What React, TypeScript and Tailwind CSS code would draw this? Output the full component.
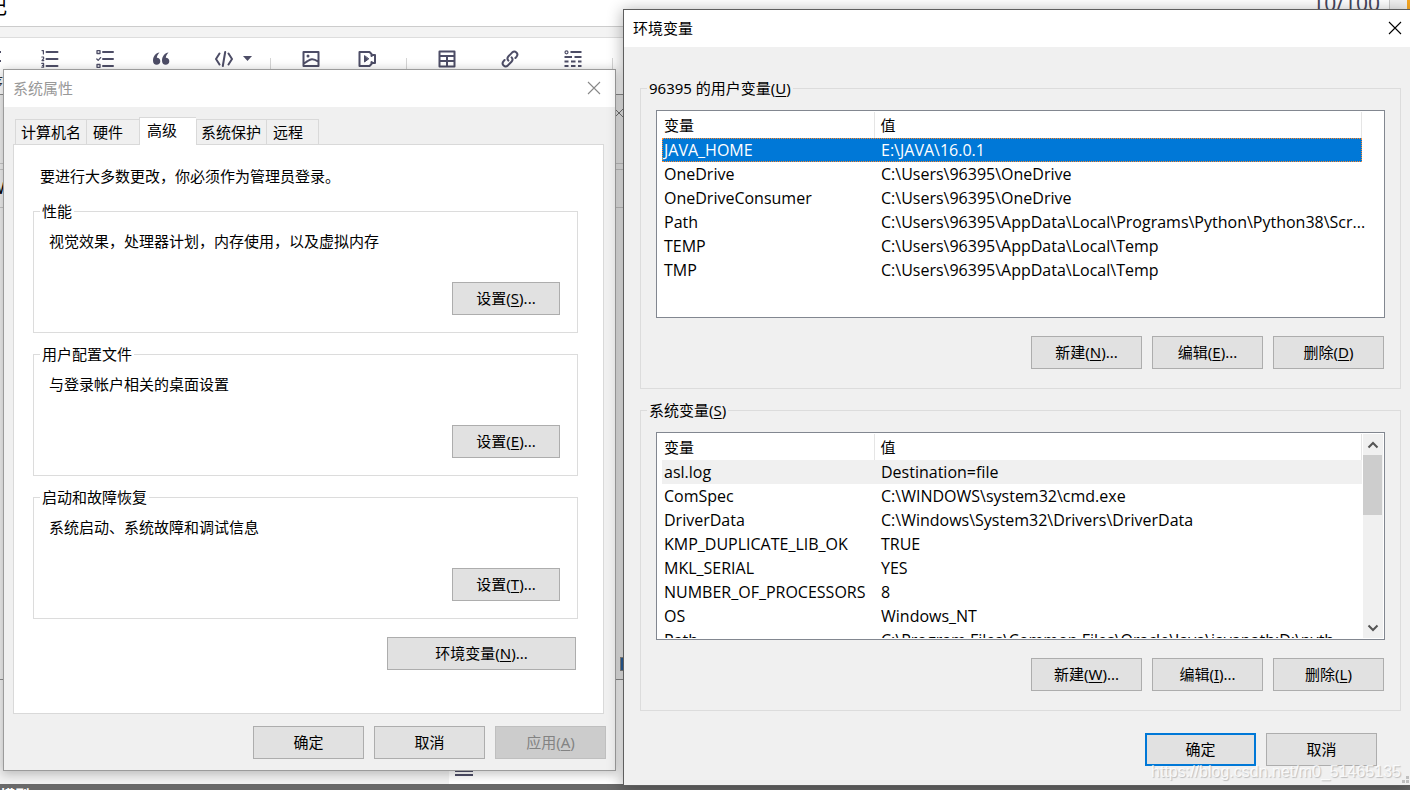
import type { ReactNode } from "react";

const toolColor = "#4d4d66";

function WindowClose({ color }: { color: string }) {
  return (
    <button type="button" aria-label="关闭" className="flex h-[35px] w-[42px] items-center justify-center">
      <svg width="14" height="14" viewBox="0 0 14 14" fill="none" stroke={color} strokeWidth="1.1">
        <path d="M1 1 L13 13 M13 1 L1 13" />
      </svg>
    </button>
  );
}

type PushButtonProps = { children: ReactNode; className?: string; primary?: boolean; disabled?: boolean };

function PushButton({ children, className = "w-[111px]", primary, disabled }: PushButtonProps) {
  const look = disabled
    ? "border border-[#bfbfbf] bg-[#cccccc] text-[#838383]"
    : primary
      ? "border-2 border-[#0078d7] bg-[#e1e1e1]"
      : "border border-[#adadad] bg-[#e1e1e1]";
  return (
    <button
      type="button"
      disabled={disabled}
      className={`flex h-[33px] shrink-0 items-center justify-center pb-[2px] whitespace-nowrap ${look} ${className}`}
    >
      <span>{children}</span>
    </button>
  );
}

function Key({ k }: { k: string }) {
  return (
    <>
      (<span className="underline underline-offset-2">{k}</span>)
    </>
  );
}

const tabs = [
  { label: "计算机名", size: "w-[71px] pl-[5px]" },
  { label: "硬件", size: "w-[53px] pl-[6px]" },
  { label: "高级", size: "w-[57px] pl-[7px]", active: true },
  { label: "系统保护", size: "w-[70px] pl-[4px]" },
  { label: "远程", size: "w-[53px] pl-[6px]" },
];

const settings = [
  { title: "性能", text: "视觉效果，处理器计划，内存使用，以及虚拟内存", k: "S" },
  { title: "用户配置文件", text: "与登录帐户相关的桌面设置", k: "E" },
  { title: "启动和故障恢复", text: "系统启动、系统故障和调试信息", k: "T" },
];

function SystemProperties() {
  return (
    <section
      aria-label="系统属性"
      className="absolute top-[69px] left-[3px] w-[613px] border border-[#9b9b9b] bg-[#f0f0f0] shadow-[0_2px_10px_1px_rgba(0,0,0,0.24)]"
    >
      <header className="flex h-[37px] items-center justify-between bg-white pb-[2px] pl-[9px] text-[#999999]">
        <h2>系统属性</h2>
        <WindowClose color="#888888" />
      </header>
      <div className="px-[9px] pt-[10px] pb-[11px]">
        <div role="tablist" className="flex items-end px-[2px]">
          {tabs.map((t) => (
            <button
              key={t.label}
              type="button"
              role="tab"
              aria-selected={!!t.active}
              className={`flex border-t border-l border-[#d9d9d9] pt-[2px] text-left whitespace-nowrap last:border-r ${t.size} ${
                t.active ? "-mb-px h-[28px] bg-white" : "h-[25px] bg-[#f0f0f0]"
              }`}
            >
              {t.label}
            </button>
          ))}
        </div>
        <div className="mr-[2px] border border-[#d9d9d9] bg-white pt-[21px] pr-[25px] pb-[43px] pl-[19px]">
          <p className="pl-[7px]">要进行大多数更改，你必须作为管理员登录。</p>
          <div className="mt-[15px] flex flex-col gap-[11px]">
            {settings.map((s) => (
              <fieldset key={s.title} className="border border-[#dcdcdc] px-[6px] pb-[17px]">
                <legend className="px-[2px]">{s.title}</legend>
                <p className="mt-[10px] pl-[9px]">{s.text}</p>
                <div className="mt-[31px] flex justify-end pr-[11px]">
                  <PushButton className="w-[108px]">
                    设置
                    <Key k={s.k} />
                    ...
                  </PushButton>
                </div>
              </fieldset>
            ))}
          </div>
          <div className="mt-[18px] flex justify-end pr-[2px]">
            <PushButton className="w-[189px]">
              环境变量
              <Key k="N" />
              ...
            </PushButton>
          </div>
        </div>
        <div className="mt-[12px] flex justify-end gap-[10px]">
          <PushButton>确定</PushButton>
          <PushButton>取消</PushButton>
          <PushButton disabled>
            应用
            <Key k="A" />
          </PushButton>
        </div>
      </div>
    </section>
  );
}

type Row = { name: string; value: string; state?: "selected" | "muted" };

const userRows: Row[] = [
  { name: "JAVA_HOME", value: "E:\\JAVA\\16.0.1", state: "selected" },
  { name: "OneDrive", value: "C:\\Users\\96395\\OneDrive" },
  { name: "OneDriveConsumer", value: "C:\\Users\\96395\\OneDrive" },
  { name: "Path", value: "C:\\Users\\96395\\AppData\\Local\\Programs\\Python\\Python38\\Scr..." },
  { name: "TEMP", value: "C:\\Users\\96395\\AppData\\Local\\Temp" },
  { name: "TMP", value: "C:\\Users\\96395\\AppData\\Local\\Temp" },
];

const systemRows: Row[] = [
  { name: "asl.log", value: "Destination=file", state: "muted" },
  { name: "ComSpec", value: "C:\\WINDOWS\\system32\\cmd.exe" },
  { name: "DriverData", value: "C:\\Windows\\System32\\Drivers\\DriverData" },
  { name: "KMP_DUPLICATE_LIB_OK", value: "TRUE" },
  { name: "MKL_SERIAL", value: "YES" },
  { name: "NUMBER_OF_PROCESSORS", value: "8" },
  { name: "OS", value: "Windows_NT" },
  { name: "Path", value: "C:\\Program Files\\Common Files\\Oracle\\Java\\javapath;D:\\pyth..." },
];

function Arrow({ d }: { d: string }) {
  return (
    <svg width="12" height="8" viewBox="0 0 12 8" fill="none" stroke="#555555" strokeWidth="2">
      <path d={d} />
    </svg>
  );
}

function VariableList({ rows, scroll }: { rows: Row[]; scroll?: boolean }) {
  return (
    <div className="flex h-[208px] overflow-hidden border border-[#828790] bg-white py-px pr-px pl-[5px]">
      <div className={`min-w-0 flex-1 ${scroll ? "overflow-hidden" : ""}`}>
        <table className="w-full table-fixed border-collapse text-left">
          <thead>
            <tr className="h-[26px]">
              <th className="w-[212px] border-r border-[#e5e5e5] p-0 pl-[2px] font-normal">变量</th>
              <th className="border-r border-[#e5e5e5] p-0 pl-[6px] font-normal">值</th>
            </tr>
          </thead>
          <tbody className="text-[16px] leading-[20px] [font-family:'Open_Sans','Noto_Sans_CJK_SC',sans-serif]">
            {rows.map((r) => (
              <tr
                key={r.name}
                className={`h-[24px] whitespace-nowrap ${
                  r.state === "selected"
                    ? "bg-[#0078d7] text-white outline-1 -outline-offset-1 outline-dotted outline-[#ff8728]"
                    : r.state === "muted"
                      ? "bg-[#f0f0f0]"
                      : ""
                }`}
              >
                <td className="p-0 pl-[2px]">{r.name}</td>
                <td className="p-0 pl-[7px]">{r.value}</td>
              </tr>
            ))}
          </tbody>
        </table>
      </div>
      {scroll ? (
        <div className="ml-px flex w-[20px] flex-col items-center bg-[#f0f0f0]">
          <button type="button" aria-label="向上滚动" className="flex h-[21px] w-full items-center justify-center">
            <Arrow d="M1.5 6.5 L6 2 L10.5 6.5" />
          </button>
          <div className="mr-px h-[60px] w-[19px] bg-[#cdcdcd]" />
          <button type="button" aria-label="向下滚动" className="mt-auto flex h-[21px] w-full items-center justify-center">
            <Arrow d="M1.5 1.5 L6 6 L10.5 1.5" />
          </button>
        </div>
      ) : (
        <div className="w-[21px]" />
      )}
    </div>
  );
}

function VariableGroup({ title, k, rows, keys, scroll }: { title: string; k: string; rows: Row[]; keys: string[]; scroll?: boolean }) {
  return (
    <fieldset className="min-w-0 border border-[#dcdcdc] px-[15px] pb-[19px]">
      <legend className="-ml-[9px] px-[2px]">
        {title}
        <Key k={k} />
      </legend>
      <div className="mt-[12px]">
        <VariableList rows={rows} scroll={scroll} />
      </div>
      <div className="mt-[18px] flex justify-end gap-[10px] pr-px">
        <PushButton>
          新建
          <Key k={keys[0]} />
          ...
        </PushButton>
        <PushButton>
          编辑
          <Key k={keys[1]} />
          ...
        </PushButton>
        <PushButton>
          删除
          <Key k={keys[2]} />
        </PushButton>
      </div>
    </fieldset>
  );
}

function EnvironmentVariables() {
  return (
    <section
      aria-label="环境变量"
      className="absolute top-[9px] right-0 left-[623px] border border-r-0 border-[#5e5e5e] bg-[#f0f0f0] shadow-[0_2px_14px_1px_rgba(0,0,0,0.3)]"
    >
      <header className="flex h-[37px] items-center justify-between bg-white pb-[2px] pl-[9px]">
        <h2>环境变量</h2>
        <div className="-mr-[6px]">
          <WindowClose color="#000000" />
        </div>
      </header>
      <div className="flex flex-col gap-[11px] pt-[31px] pr-[9px] pl-[16px]">
        <VariableGroup title="96395 的用户变量" k="U" rows={userRows} keys={["N", "E", "D"]} />
        <VariableGroup title="系统变量" k="S" rows={systemRows} keys={["W", "I", "L"]} scroll />
      </div>
      <div className="mt-[22px] mr-[33px] mb-[19px] flex justify-end gap-[10px]">
        <PushButton primary>确定</PushButton>
        <PushButton>取消</PushButton>
      </div>
      <p className="absolute right-[9px] bottom-[3px] text-[16px] text-white/80 [font-family:'Liberation_Sans',sans-serif] [text-shadow:1px_1px_1px_#bbbbbb]">
        https://blog.csdn.net/m0_51465135
      </p>
      <svg className="absolute right-0 bottom-[2px]" width="8" height="8" viewBox="0 0 8 8" fill="#bfbfbf">
        <path d="M0 5h3v3H0z M4 5h3v3H4z M4 1h3v3H4z" />
      </svg>
    </section>
  );
}

function Tool({ label, className, children }: { label: string; className: string; children: ReactNode }) {
  return (
    <button type="button" aria-label={label} className={`flex shrink-0 ${className}`}>
      <svg width="18" height="18" viewBox="0 0 18 18" fill="none" stroke={toolColor} strokeWidth="2" strokeLinecap="round" strokeLinejoin="round">
        {children}
      </svg>
    </button>
  );
}

function Divider({ className }: { className: string }) {
  return <span className={`mt-[8px] h-[14px] w-px shrink-0 bg-[#d5d5d5] ${className}`} />;
}

function EditorToolbar() {
  return (
    <div className="h-[56px] overflow-hidden bg-white pt-[12px]">
      <div className="flex items-start">
        <span className="mt-px flex w-px flex-col gap-[7px]">
          <span className="h-[2px] bg-[#4d4d66]" />
          <span className="h-[2px] bg-[#4d4d66]" />
        </span>
        <Tool label="有序列表" className="ml-[40px]">
          <path d="M5.500 2H16.500M5.500 9H16.500M5.500 16H16.500" />
          <path strokeWidth="1.200" d="M1 .6H2.400V4M.8 7H2.600V8.600L1 10.600H2.800M.8 13.400H2.600V17.200H.8M1.400 15.300H2.600" />
        </Tool>
        <Tool label="待办列表" className="ml-[37px]">
          <path d="M7 2H17M7 9H17M7 16H17" />
          <path strokeWidth="1.300" d="M1 .7H4V3.500H1zM1 14.500H4V17.300H1zM.8 9L2.200 10.400L4.600 7.600" />
        </Tool>
        <Tool label="引用" className="ml-[38px]">
          <path fill={toolColor} stroke="none" d="M7.500 2.500C4 3 1 6 1 10.700C1 13.300 2.500 14.700 4.600 14.700C6.800 14.700 8.300 13.200 8.300 11.200C8.300 9 6.700 7.700 4.800 7.800C5 5.700 6 4.200 7.500 2.500zM16.500 2.500C13 3 10 6 10 10.700C10 13.300 11.500 14.700 13.600 14.700C15.800 14.700 17.300 13.200 17.300 11.200C17.300 9 15.700 7.700 13.800 7.800C14 5.700 15 4.200 16.500 2.500z" />
        </Tool>
        <Tool label="代码" className="ml-[45px]">
          <path d="M4.500 3.500L1 9L4.500 14.500M13.500 3.500L17 9L13.500 14.500M10.200 2L7.800 16" />
        </Tool>
        <svg className="mt-[6px] ml-[10px] shrink-0" width="9" height="5" viewBox="0 0 9 5" fill={toolColor}>
          <path d="M0 0H9L4.500 5z" />
        </svg>
        <Divider className="ml-[18px]" />
        <Tool label="图片" className="ml-[31px]">
          <path d="M1.500 2H16.500V16H1.500zM2 13.500L5.500 11.200C8 9.500 10.500 7.500 16 11.500" />
          <circle cx="6" cy="6" r="1.500" fill={toolColor} stroke="none" />
        </Tool>
        <Tool label="视频" className="ml-[38px]">
          <path d="M1.500 2H11.500L13.500 4V6L15 5H17V13H15L13.500 12V14L11.500 16H1.500z" />
          <path d="M6.500 6V12L10.500 9z" fill={toolColor} strokeWidth="1" />
        </Tool>
        <Divider className="ml-[30px]" />
        <Tool label="表格" className="ml-[31px]">
          <path d="M1.500 1.500H16.500V16.500H1.500zM2 6H16M2 11H16M9 6V16" />
        </Tool>
        <Tool label="链接" className="ml-[45px]">
          <path d="M7.400 10.600C6 9 6.300 7.500 7.500 6.300L11.300 2.400C14 .2 18 3.500 15.600 6.600L14.400 8M10.600 7.400C12 9 11.700 10.500 10.500 11.700L6.700 15.600C4 17.800 0 14.500 2.400 11.400L3.600 10" />
        </Tool>
        <Tool label="目录" className="ml-[45px]">
          <path strokeLinecap="butt" d="M6.500 2H17.500M.5 7H8M10.500 7H17.500M.5 11.500H4.500M7 11.500H11.500M14 11.500H17.500M.5 16H4.500M7 16H11.500M14 16H17.500" />
          <circle cx="2.500" cy="2.300" r="1.500" strokeWidth="1.200" />
        </Tool>
        <Divider className="ml-[30px]" />
      </div>
      <div className="-ml-[11px] text-[14px] leading-[20px] text-[#333333]">序</div>
    </div>
  );
}

function Backdrop() {
  return (
    <div className="flex min-h-screen flex-col overflow-hidden bg-white">
      <div className="flex h-[27px] items-start justify-between border-b border-[#cccccc]">
        <span className="-mt-[7px] -ml-[13px] text-[20px] leading-[27px]">记</span>
        <div className="flex">
          <span className="-mt-[9px] mr-[9px] text-[21px] leading-[24px] text-[#45455c]">10/100</span>
          <span className="h-[26px] w-[18px] border-l border-[#cccccc] bg-[#f2f2f2]" />
          <span className="h-[26px] w-[3px] bg-[#f5a623]" />
        </div>
      </div>
      <div className="h-[11px] border-b border-[#dddddd] bg-[#f3f3f3]" />
      <EditorToolbar />
      <div className="flex h-[586px] flex-col border-y border-[#8f8f8f] bg-[#f0f0f0]">
        <div className="h-[69px] border-b border-[#c8c8c8]" />
        <div className="h-[6px] border-b border-[#c8c8c8]" />
        <div className="h-[38px] overflow-hidden border-b border-[#c8c8c8]">
          <span className="-ml-[10px] text-[16px] leading-[36px]">W</span>
        </div>
      </div>
      <div className="flex flex-1">
        <div className="w-[449px] bg-[#f2f2f2]" />
        <div className="flex flex-1 items-end bg-white pb-[8px] pl-[6px]">
          <span className="flex h-[6px] w-[18px] flex-col justify-between">
            <span className="h-[2px] bg-[#4d4d66]" />
            <span className="h-[2px] bg-[#4d4d66]" />
          </span>
        </div>
      </div>
      <div className="h-[6px] overflow-hidden bg-[#696969] text-[15px] leading-[22px] font-bold text-white">
        <span>模型 W</span>
      </div>
    </div>
  );
}

export default function App() {
  return (
    <main className="relative min-h-screen overflow-hidden text-[15px] leading-[20px] text-black [font-family:'Noto_Sans','Noto_Sans_CJK_SC',sans-serif]">
      <Backdrop />
      <svg className="absolute top-[107px] left-[613px]" width="12" height="12" viewBox="0 0 12 12" stroke="#777777">
        <path d="M0 0L12 12M12 0L0 12" />
      </svg>
      <span className="absolute top-[657px] left-[620px] h-[14px] w-[6px] border border-[#888888] bg-[#2b62a0]" />
      <SystemProperties />
      <EnvironmentVariables />
    </main>
  );
}
